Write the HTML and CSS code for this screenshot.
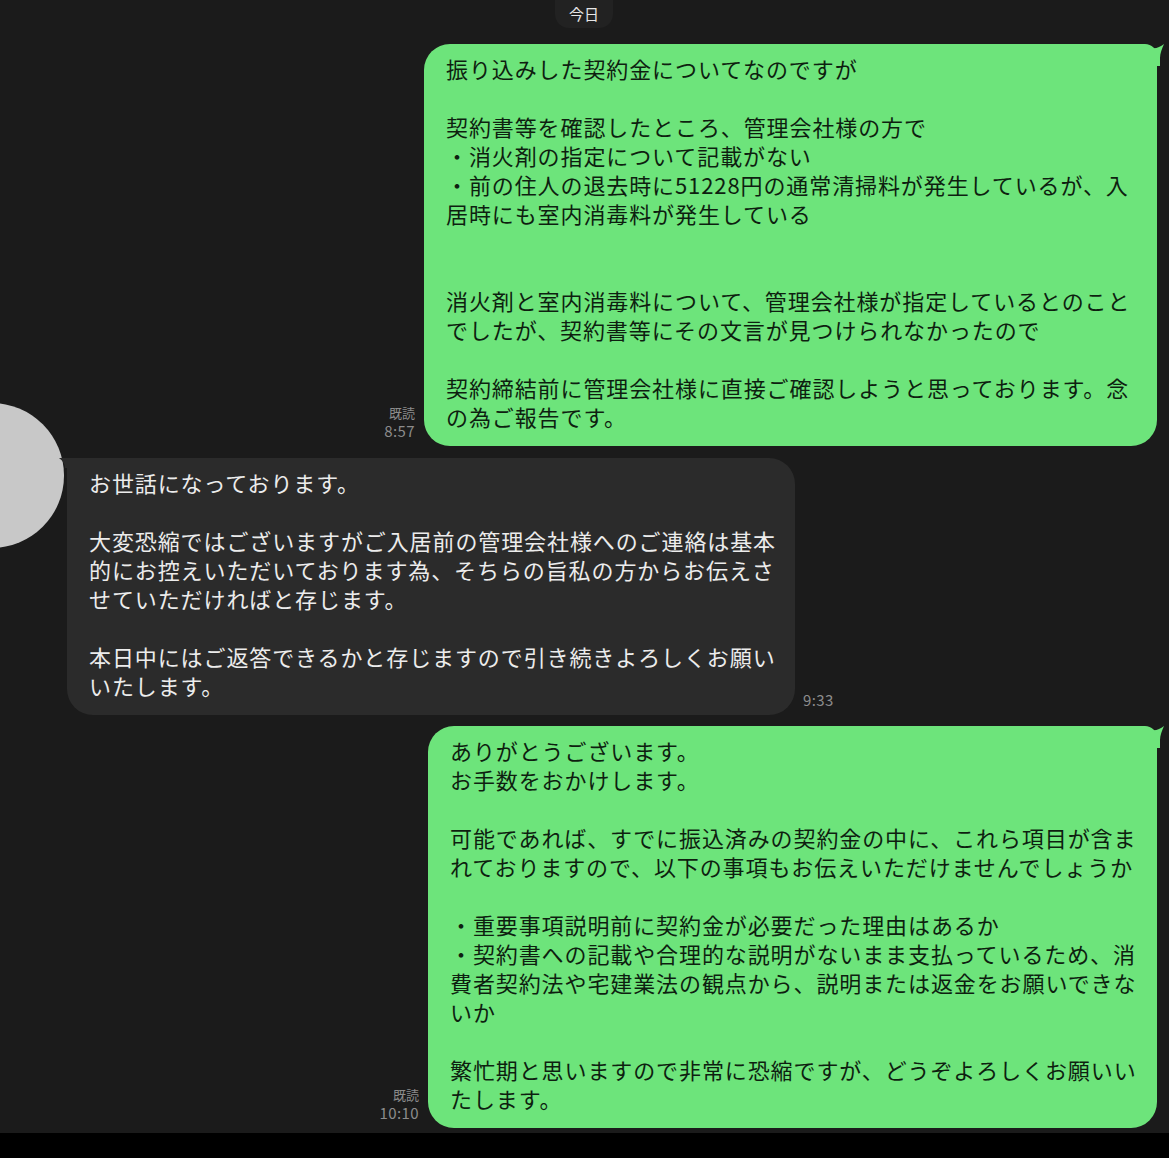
FILE: index.html
```html
<!DOCTYPE html>
<html lang="ja">
<head>
    <meta charset="UTF-8">
    <meta name="viewport" content="width=device-width, initial-scale=1.0">
    <title>トーク</title>
    <link rel="stylesheet" href="styles.css">
</head>
<body>
    <div class="chat">
        <div class="date-row"><span class="date-pill">今日</span></div>

        <div class="row mine first">
            <div class="meta"><span>既読</span><span>8:57</span></div>
            <div class="bubble green b1">
                <svg class="tail-right" width="14" height="22" viewBox="0 0 14 22"><path d="M0 4 C5 5 9 3 13 0 C11 5 9 9 9 14 L9 22 L0 22 Z" fill="#6de47b"/></svg>
                <p>振り込みした契約金についてなのですが<br><br>契約書等を確認したところ、管理会社様の方で<br>・消火剤の指定について記載がない<br>・前の住人の退去時に51228円の通常清掃料が発生しているが、入<br>居時にも室内消毒料が発生している<br><br><br>消火剤と室内消毒料について、管理会社様が指定しているとのこと<br>でしたが、契約書等にその文言が見つけられなかったので<br><br>契約締結前に管理会社様に直接ご確認しようと思っております。念<br>の為ご報告です。</p>
            </div>
        </div>

        <div class="row theirs">
            <div class="avatar"></div>
            <div class="bubble dark b2">
                <svg class="tail-left" width="14" height="10" viewBox="0 0 14 10"><path d="M14 0 L14 10 L6 10 C6 6 4 3 0 0 Z" fill="#2b2b2b"/></svg>
                <p>お世話になっております。<br><br>大変恐縮ではございますがご入居前の管理会社様へのご連絡は基本<br>的にお控えいただいております為、そちらの旨私の方からお伝えさ<br>せていただければと存じます。<br><br>本日中にはご返答できるかと存じますので引き続きよろしくお願い<br>いたします。</p>
            </div>
            <div class="meta left"><span>9:33</span></div>
        </div>

        <div class="row mine">
            <div class="meta"><span>既読</span><span>10:10</span></div>
            <div class="bubble green b3">
                <svg class="tail-right" width="14" height="22" viewBox="0 0 14 22"><path d="M0 4 C5 5 9 3 13 0 C11 5 9 9 9 14 L9 22 L0 22 Z" fill="#6de47b"/></svg>
                <p>ありがとうございます。<br>お手数をおかけします。<br><br>可能であれば、すでに振込済みの契約金の中に、これら項目が含ま<br>れておりますので、以下の事項もお伝えいただけませんでしょうか<br><br>・重要事項説明前に契約金が必要だった理由はあるか<br>・契約書への記載や合理的な説明がないまま支払っているため、消<br>費者契約法や宅建業法の観点から、説明または返金をお願いできな<br>いか<br><br>繁忙期と思いますので非常に恐縮ですが、どうぞよろしくお願いい<br>たします。</p>
            </div>
        </div>
    </div>
    <div class="bottom-bar"></div>
</body>
</html>
```

FILE: styles.css
```css
html, body {
    margin: 0;
    padding: 0;
}
body {
    background: #1b1b1b;
    font-family: "Noto Sans CJK JP", "Noto Sans", sans-serif;
    width: 1169px;
    height: 1158px;
    overflow: hidden;
}
.chat {
    height: 1133px;
    overflow: hidden;
    display: flex;
    flex-direction: column;
}
.date-row {
    display: flex;
    justify-content: center;
    height: 44px;
}
.date-pill {
    background: #222;
    color: #e6e6e6;
    font-size: 15px;
    line-height: 28px;
    height: 28px;
    padding: 0 14px;
    border-radius: 0 0 14px 14px;
    margin-left: -1px;
}
.row {
    display: flex;
    align-items: flex-end;
}
.row.mine {
    justify-content: flex-end;
    padding-right: 12px;
}
.row.theirs {
    margin-top: 12px;
    align-items: flex-start;
}
.row.mine + .row.theirs + .row.mine {
    margin-top: 11px;
}
.meta {
    display: flex;
    flex-direction: column;
    align-items: flex-end;
    color: #8c8c8c;
    font-size: 13px;
    line-height: 18px;
    margin-right: 9px;
    margin-bottom: 6px;
}
.meta span:last-child {
    font-size: 15px;
    letter-spacing: 0.4px;
}
.meta.left {
    align-self: flex-end;
    margin: 0 0 6px 8px;
}
.bubble {
    position: relative;
    border-radius: 26px;
    box-sizing: border-box;
}
.bubble p {
    margin: 0;
    font-size: 22px;
    line-height: 29px;
    white-space: nowrap;
    letter-spacing: 0.9px;
}
.green {
    background: #6de47b;
    color: #0e1f10;
    border-top-right-radius: 12px;
}
.dark {
    background: #2b2b2b;
    color: #ececec;
    border-top-left-radius: 6px;
}
.b1 {
    width: 733px;
    padding: 10px 12px 15px 22px;
}
.b2 {
    width: 728px;
    padding: 10px 12px 15px 22px;
}
.b3 {
    width: 729px;
    padding: 10px 12px 15px 22px;
}
.tail-right {
    position: absolute;
    top: 0;
    right: -8px;
}
.tail-left {
    position: absolute;
    top: 0;
    left: -8px;
}
.avatar {
    width: 145px;
    height: 145px;
    border-radius: 50%;
    background: #c8c8c8;
    margin: -55px 3px 0 -81px;
    flex-shrink: 0;
}
.bottom-bar {
    height: 25px;
    background: #000;
}
```
